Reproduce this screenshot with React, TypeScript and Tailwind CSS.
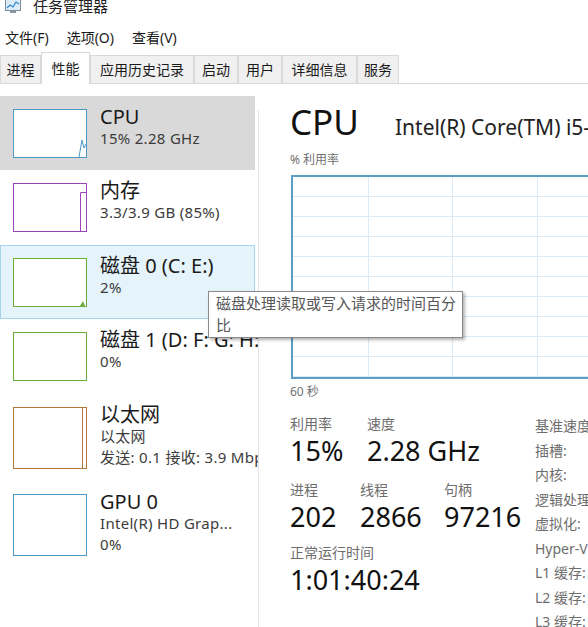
import React from "react";

const tabs = [
  { label: "进程", w: "w-[41px]" },
  { label: "性能", w: "w-[49px]", active: true },
  { label: "应用历史记录", w: "w-[104px]" },
  { label: "启动", w: "w-[44px]" },
  { label: "用户", w: "w-[44px]" },
  { label: "详细信息", w: "w-[75px]" },
  { label: "服务", w: "w-[42px]" },
];

const Thumb = ({ color, tall, kind }: { color: string; tall?: boolean; kind: string }) => {
  const h = tall ? 62 : 49;
  return (
    <svg width="74" height={h} className="shrink-0">
      <rect x="0.5" y="0.5" width="73" height={h - 1} fill="white" stroke={color} />
      {kind === "cpu" && (
        <polyline points={`66,${h - 1} 69,${h - 18} 71,${h - 10} 73,${h - 14}`} fill="none" stroke={color} />
      )}
      {kind === "mem" && (
        <polyline points={`67.5,${h - 1} 67.5,9.5 73,9.5`} fill="none" stroke={color} />
      )}
      {kind === "disk" && <polygon points={`67,${h - 1} 70,${h - 6} 72,${h - 1}`} fill={color} />}
      {kind === "eth" && <line x1="69.5" y1="1" x2="69.5" y2={h - 1} stroke={color} />}
    </svg>
  );
};

const Item = ({
  title,
  lines,
  color,
  kind,
  h,
  tone,
}: {
  title: string;
  lines: string[];
  color: string;
  kind: string;
  h: string;
  tone?: "sel" | "hover";
}) => (
  <div
    className={
      "flex w-[255px] items-start gap-[13px] pl-[12px] pt-[12px] border " +
      h +
      " " +
      (tone === "sel"
        ? "bg-[#d9d9d9] border-[#d9d9d9]"
        : tone === "hover"
        ? "bg-[#e5f3fb] border-[#a6d3ee]"
        : "border-transparent")
    }
  >
    <Thumb color={color} kind={kind} tall={lines.length > 1} />
    <div className="-mt-[3px] whitespace-nowrap text-[#1a1a1a]">
      <div className="text-[20px] leading-[22px]">{title}</div>
      {lines.map((l) => (
        <div key={l} className="text-[15px] leading-[21px] tracking-[0.3px] text-[#3c3c3c]">
          {l}
        </div>
      ))}
    </div>
  </div>
);

const Stat = ({ label, value, w }: { label: string; value: string; w: string }) => (
  <div className={w + " shrink-0 whitespace-nowrap"}>
    <div className="text-[14px] leading-[20px] text-[#6d6d6d]">{label}</div>
    <div className="text-[27px] leading-[34px] text-[#111]">{value}</div>
  </div>
);

const specs = ["基准速度:", "插槽:", "内核:", "逻辑处理器:", "虚拟化:", "Hyper-V 支持:", "L1 缓存:", "L2 缓存:", "L3 缓存:"];

export default function App() {
  return (
    <div className="relative w-[588px] h-[627px] overflow-hidden bg-white font-['Noto_Sans','Noto_Sans_CJK_SC',sans-serif] text-[#1a1a1a]">
      {/* title bar */}
      <div className="flex h-[23px] items-start gap-[12px] pl-[5px]">
        <svg width="16" height="14" viewBox="0 0 16 14" className="-mt-[1px]">
          <rect x="0.5" y="0.5" width="15" height="11" fill="#dcebf7" stroke="#7b8a99" />
          <polyline points="2,9 5,6 8,8 11,3 14,5" fill="none" stroke="#2f86c8" strokeWidth="1.2" />
          <rect x="5" y="12" width="6" height="2" fill="#8a97a4" />
        </svg>
        <span className="-mt-[2px] text-[15px] leading-[16px] text-[#222]">任务管理器</span>
      </div>

      {/* menu */}
      <div className="flex h-[29px] items-center gap-[18px] pl-[5px] text-[14px] text-[#1a1a1a]">
        <span>文件(F)</span>
        <span>选项(O)</span>
        <span>查看(V)</span>
      </div>

      {/* tabs */}
      <div className="flex h-[32px] items-end border-b border-[#d9d9d9]">
        {tabs.map((t) => (
          <div
            key={t.label}
            className={
              "flex items-center justify-center text-[14px] border-t border-l border-r border-[#d9d9d9] " +
              t.w +
              (t.active ? " relative -mb-px h-[32px] bg-white" : " h-[28px] bg-[#f0f0f0]")
            }
          >
            {t.label}
          </div>
        ))}
      </div>

      <div className="flex">
        {/* left list */}
        <div className="w-[258px] shrink-0 overflow-hidden pt-[12px]">
          <Item title="CPU" lines={["15% 2.28 GHz"]} color="#4b98c6" kind="cpu" h="h-[74px]" tone="sel" />
          <Item title="内存" lines={["3.3/3.9 GB (85%)"]} color="#9a44b8" kind="mem" h="h-[75px]" />
          <Item title="磁盘 0 (C: E:)" lines={["2%"]} color="#6aae3a" kind="disk" h="h-[74px]" tone="hover" />
          <Item title="磁盘 1 (D: F: G: H:)" lines={["0%"]} color="#6aae3a" kind="none" h="h-[75px]" />
          <Item
            title="以太网"
            lines={["以太网", "发送: 0.1 接收: 3.9 Mbps"]}
            color="#b7773a"
            kind="eth"
            h="h-[87px]"
          />
          <Item
            title="GPU 0"
            lines={["Intel(R) HD Grap...", "0%"]}
            color="#4b98c6"
            kind="none"
            h="h-[87px]"
          />
        </div>
        <div className="mt-[26px] h-[520px] w-px shrink-0 bg-[#e3e3e3]" />

        {/* right panel */}
        <div className="w-[420px] shrink-0 pl-[31px]">
          <div className="mt-[18px] flex h-[40px] items-baseline whitespace-nowrap">
            <span className="w-[105px] shrink-0 text-[35px] leading-[40px] text-[#111]">CPU</span>
            <span className="text-[21px] leading-[40px] text-[#222]">Intel(R) Core(TM) i5-7200U CPU @ 2.50GHz</span>
          </div>
          <div className="mt-[10px] text-[12px] leading-[16px] text-[#707070]">% 利用率</div>
          <div className="ml-px mt-[7px] grid h-[204px] w-[380px] grid-cols-[76px_84px_85px_85px_50px] grid-rows-10 border-2 border-[#5c9fc6]">
            {Array.from({ length: 50 }).map((_, i) => (
              <div key={i} className="border-r border-b border-[#dbeaf4]" />
            ))}
          </div>
          <div className="mt-[5px] text-[12px] leading-[16px] text-[#707070]">60 秒</div>

          <div className="mt-[14px] flex">
            <div className="w-[245px] shrink-0">
              <div className="flex">
                <Stat label="利用率" value="15%" w="w-[77px]" />
                <Stat label="速度" value="2.28 GHz" w="w-[120px]" />
              </div>
              <div className="mt-[12px] flex">
                <Stat label="进程" value="202" w="w-[70px]" />
                <Stat label="线程" value="2866" w="w-[84px]" />
                <Stat label="句柄" value="97216" w="w-[90px]" />
              </div>
              <div className="mt-[9px] flex">
                <Stat label="正常运行时间" value="1:01:40:24" w="w-[200px]" />
              </div>
            </div>
            <div className="whitespace-nowrap text-[14px] leading-[24.5px] text-[#6d6d6d]">
              {specs.map((s) => (
                <div key={s}>{s}</div>
              ))}
            </div>
          </div>
        </div>
      </div>

      {/* tooltip */}
      <div className="absolute left-[208px] top-[291px] h-[47px] w-[255px] border border-[#8a8a8a] bg-white pl-[7px] text-[15px] leading-[22px] text-[#575757] shadow-[2px_2px_3px_rgba(0,0,0,0.3)]">
        磁盘处理读取或写入请求的时间百分
        <br />比
      </div>
    </div>
  );
}
